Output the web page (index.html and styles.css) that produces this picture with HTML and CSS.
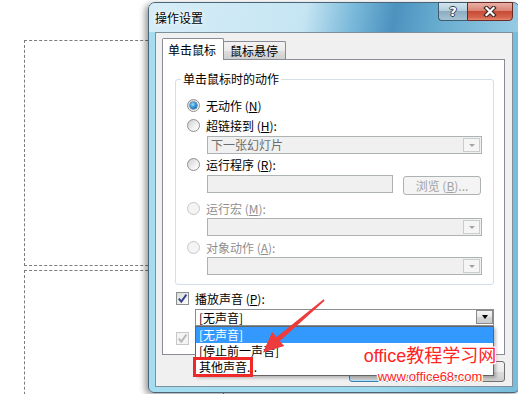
FILE: index.html
```html
<!DOCTYPE html>
<html lang="zh-CN">
<head>
<meta charset="utf-8">
<link rel="stylesheet" href="styles.css">
</head>
<body>
<div class="slide">
  <div class="ph ph1"></div>
  <div class="ph ph2"></div>
</div>

<div class="dialog">
  <div class="titlebar">
    <span class="title">操作设置</span>
    <div class="caps">
      <div class="cap help">?</div>
      <div class="cap close">
        <svg width="14" height="11" viewBox="0 0 14 11"><path d="M3.5 2 L10.5 9 M10.5 2 L3.5 9" stroke="#3a2a28" stroke-width="4.4" stroke-linecap="square" fill="none"/><path d="M3.5 2 L10.5 9 M10.5 2 L3.5 9" stroke="#fff" stroke-width="2.2" stroke-linecap="square" fill="none"/></svg>
      </div>
    </div>
  </div>
  <div class="client">
    <div class="tabs">
      <div class="tab active">单击鼠标</div>
      <div class="tab">鼠标悬停</div>
    </div>
    <div class="panel">
      <div class="group">
        <div class="legend">单击鼠标时的动作</div>
        <div class="opt first"><span class="radio on"></span><span>无动作 (<u>N</u>)</span></div>
        <div class="opt"><span class="radio"></span><span>超链接到 (<u>H</u>):</span></div>
        <div class="combo c1"><span class="ctext">下一张幻灯片</span><span class="cbtn"><i></i></span></div>
        <div class="opt"><span class="radio"></span><span>运行程序 (<u>R</u>):</span></div>
        <div class="fileline"><span class="tbox"></span><span class="btn-browse">浏览 (<u>B</u>)...</span></div>
        <div class="opt dis o4"><span class="radio"></span><span>运行宏 (<u>M</u>):</span></div>
        <div class="combo"><span class="ctext"></span><span class="cbtn"><i></i></span></div>
        <div class="opt dis o5"><span class="radio"></span><span>对象动作 (<u>A</u>):</span></div>
        <div class="combo"><span class="ctext"></span><span class="cbtn"><i></i></span></div>
      </div>
      <div class="chk-row r1">
        <span class="chk"><svg width="11" height="11" viewBox="0 0 11 11"><path d="M1.8 5.6 L4.3 8.6 L9.4 1.6" stroke="#34418c" stroke-width="1.9" fill="none"/></svg></span>
        <span>播放声音 (<u>P</u>):</span>
      </div>
      <div class="combo sound">
        <span class="ctext">[无声音]</span><span class="cbtn"><i></i></span>
        <div class="list">
          <div class="item sel">[无声音]</div>
          <div class="item">[停止前一声音]</div>
          <div class="item">其他声音...<span class="mark"></span></div>
        </div>
      </div>
      <div class="chk-row r2 dis">
        <span class="chk"><svg width="11" height="11" viewBox="0 0 11 11"><path d="M1.8 5.6 L4.3 8.6 L9.4 1.6" stroke="#b8b8b8" stroke-width="1.9" fill="none"/></svg></span>
      </div>
    </div>
    <div class="buttons">
      <div class="btn default"></div>
      <div class="btn"></div>
    </div>
  </div>
</div>

<svg class="arrow" width="518" height="394" viewBox="0 0 518 394">
  <polygon points="323.6,299.3 276.6,337.1 272.2,332.0 263,352.5 284.3,346.0 279.8,340.9 324.6,300.7" fill="#ee3b3b"/>
</svg>

<div class="watermark">
  <div class="wm1">office教程学习网</div>
  <div class="wm2">www.office68.com</div>
</div>
</body>
</html>
```

FILE: styles.css
```css
* { box-sizing: border-box; }
html, body { margin: 0; padding: 0; }
body {
  position: relative;
  width: 518px;
  height: 394px;
  overflow: hidden;
  background: #fff;
  font-family: "Noto Sans CJK SC", "Noto Sans", sans-serif;
  font-size: 12px;
  color: #000;
}
u { text-decoration: underline; text-underline-offset: 1px; }

/* slide placeholders behind the dialog */
.slide { padding: 40px 0 0 24px; }
.ph { width: 200px; border: 1px dashed #7c7c7c; }
.ph1 { height: 226px; }
.ph2 { height: 140px; margin-top: 4px; }

/* window */
.dialog {
  position: absolute;
  left: 148px;
  top: 2px;
  width: 372px;
  height: 391px;
  display: flex;
  flex-direction: column;
  border: 1px solid #4a6577;
  border-radius: 7px 7px 6px 6px;
  background: linear-gradient(90deg, #a4ddef 0%, #9fd9ee 60%, #78bcdb 100%);
  box-shadow: -3px 2px 6px rgba(0, 0, 0, .4);
}
.titlebar {
  height: 29px;
  display: flex;
  align-items: flex-start;
  padding: 0 6px;
  border-radius: 6px 6px 0 0;
  background: linear-gradient(100deg, #d6edf7 0%, #c6e5f3 42%, #7ab9da 55%, #4b92bf 66%, #68acd0 78%, #98cbe4 100%);
}
.title {
  line-height: 29px;
  text-shadow: 0 0 6px #fff, 0 0 3px #fff;
}
.caps { margin-left: auto; margin-top: -1px; display: flex; }
.cap {
  height: 19px;
  border: 1px solid #3f5b6e;
  display: flex;
  align-items: center;
  justify-content: center;
}
.help {
  width: 29px;
  border-right: 0;
  border-radius: 0 0 0 4px;
  background: linear-gradient(#d3e4ee 0%, #b3cddc 45%, #8cadc2 50%, #a6c3d4 100%);
  color: #fff;
  font: bold 13px "DejaVu Sans", sans-serif;
  text-shadow: 1px 0 0 #2f4250, -1px 0 0 #2f4250, 0 1px 0 #2f4250, 0 -1px 0 #2f4250;
}
.close {
  width: 46px;
  border-color: #6b2a22;
  border-radius: 0 0 4px 0;
  background: linear-gradient(#eab0a6 0%, #d98474 45%, #c74b35 50%, #d5664f 85%, #e58a70 100%);
}
.close svg { display: block; }

/* client area */
.client {
  flex: 1;
  margin: 0 6px 5px;
  border: 1px solid #7d909c;
  background: #f0f0f0;
  padding: 5px 7px 0 6px;
}
.tabs { display: flex; align-items: flex-end; height: 21px; }
.tab {
  height: 18px;
  border: 1px solid #898c95;
  border-bottom: 0;
  margin-left: -1px;
  padding: 0 7px 0 6px;
  line-height: 17px;
  border-radius: 2px 2px 0 0;
  background: linear-gradient(#f3f3f3 0%, #ebebeb 50%, #dedede 51%, #cfcfcf 100%);
}
.tab.active {
  height: 22px;
  margin-left: 0;
  margin-bottom: -1px;
  padding: 0 7px 0 5px;
  line-height: 21px;
  background: #fff;
  position: relative;
  z-index: 1;
}
.panel {
  height: 296px;
  border: 1px solid #898c95;
  background: #fff;
  padding: 19px 10px 0 12px;
}

/* group box */
.group {
  border: 1px solid #d5dfe5;
  border-radius: 3px;
  padding: 0 0 9px 11px;
}
.legend {
  width: max-content;
  margin: -9px 0 0 -6px;
  padding: 0 2px;
  background: #fff;
  line-height: 16px;
}
.opt { display: flex; align-items: center; height: 20px; white-space: pre; }
.opt.first { margin-top: 8px; }
.opt.o4 { margin-top: 3px; }
.opt.o5 { margin-top: 1px; }
.dis { color: #8f8f8f; }

.radio {
  flex: none;
  width: 13px;
  height: 13px;
  margin-right: 6px;
  padding: 2px;
  border-radius: 50%;
  border: 1px solid #8e8f8f;
  background: linear-gradient(135deg, #cfcfcf, #f4f4f4 65%, #fff);
}
.radio.on::after {
  content: "";
  display: block;
  width: 7px;
  height: 7px;
  border-radius: 50%;
  background: radial-gradient(circle at 40% 35%, #a4e0ff 0, #3a9de0 40%, #17609e 85%);
  box-shadow: 0 0 0 .5px #1c4f7e;
}
.dis .radio { border-color: #c8c8c8; background: #f4f4f4; }

/* combo boxes */
.combo {
  display: flex;
  width: 275px;
  height: 18px;
  margin-left: 20px;
  border: 1px solid #adb2b5;
  background: #f0f0f0;
}
.combo.c1 { margin-top: 1px; }
.ctext { flex: 1; padding-left: 3px; line-height: 16px; color: #6d6d6d; white-space: nowrap; }
.cbtn {
  flex: none;
  width: 17px;
  margin: 1px;
  border: 1px solid #cbcccd;
  background: #f5f5f5;
  display: flex;
  align-items: center;
  justify-content: center;
}
.cbtn i {
  width: 0;
  height: 0;
  border-left: 3px solid transparent;
  border-right: 3px solid transparent;
  border-top: 3px solid #a3a3a3;
}

.fileline { display: flex; height: 20px; margin: 1px 0 0 20px; }
.tbox { width: 186px; height: 18px; border: 1px solid #adb2b5; background: #f0f0f0; }
.btn-browse {
  width: 78px;
  height: 19px;
  margin: 1px 0 0 10px;
  border: 1px solid #adb2b5;
  border-radius: 3px;
  background: #f4f4f4;
  color: #a3a3a3;
  text-align: center;
  line-height: 17px;
  white-space: pre;
}

/* check boxes */
.chk-row { display: flex; align-items: center; height: 20px; margin-left: 1px; white-space: pre; }
.chk-row.r1 { margin-top: 3px; }
.chk-row.r2 { margin-top: 2px; }
.chk {
  flex: none;
  width: 13px;
  height: 13px;
  margin-right: 6px;
  border: 1px solid #8e8f8f;
  background: linear-gradient(135deg, #d8d8d8, #fff);
}
.chk svg { display: block; }
.dis .chk { border-color: #c8c8c8; background: #f4f4f4; }

/* sound combo + open list */
.combo.sound {
  position: relative;
  width: 299px;
  height: 17px;
  margin-top: 1px;
  border-color: #8b8e93;
  background: #fff;
}
.sound .ctext { color: #000; line-height: 15px; }
.sound .cbtn {
  width: 17px;
  height: 14px;
  margin: 0;
  border: 1px solid #8a8a8a;
  background: linear-gradient(#f6f6f6 0%, #e6e6e6 50%, #d6d6d6 51%, #cbcbcb 100%);
}
.sound .cbtn i {
  border-left-width: 3.5px;
  border-right-width: 3.5px;
  border-top: 4px solid #000;
}
.list {
  position: absolute;
  left: -1px;
  top: calc(100% + 1px);
  width: 299px;
  border: 1px solid #646464;
  background: #fff;
  z-index: 5;
  box-shadow: 2px 2px 3px rgba(0, 0, 0, .25);
}
.item { position: relative; height: 16px; line-height: 16px; padding-left: 3px; white-space: nowrap; }
.item.sel { background: #3399ff; color: #fff; }
.mark {
  position: absolute;
  left: -3px;
  top: -2px;
  width: 60px;
  height: 20px;
  border: 3px solid #f02828;
}

/* dialog buttons (their captions are hidden behind the open list) */
.buttons { display: flex; justify-content: flex-end; gap: 6px; margin-top: 6px; }
.btn {
  width: 75px;
  height: 21px;
  border: 1px solid #707070;
  border-radius: 3px;
  background: linear-gradient(#f2f2f2 0%, #ebebeb 50%, #dddddd 51%, #cfcfcf 100%);
}
.btn.default { border-color: #3c7fb1; box-shadow: inset 0 0 0 1px #aee1f7; }

/* annotations */
.arrow { position: absolute; left: 0; top: 0; z-index: 10; pointer-events: none; }
.watermark {
  position: absolute;
  left: 360px;
  top: 346px;
  width: 140px;
  z-index: 11;
  text-align: center;
  color: #ff2424;
  font-family: "Liberation Sans", "Noto Sans CJK SC", sans-serif;
  text-shadow: 1px 0 0 #fff, -1px 0 0 #fff, 0 1px 0 #fff, 0 -1px 0 #fff,
               1px 1px 0 #fff, -1px -1px 0 #fff, 1px -1px 0 #fff, -1px 1px 0 #fff;
}
.wm1 { font-size: 18px; line-height: 20px; }
.wm2 { font-size: 13px; line-height: 16px; margin-top: 3px; }
```
